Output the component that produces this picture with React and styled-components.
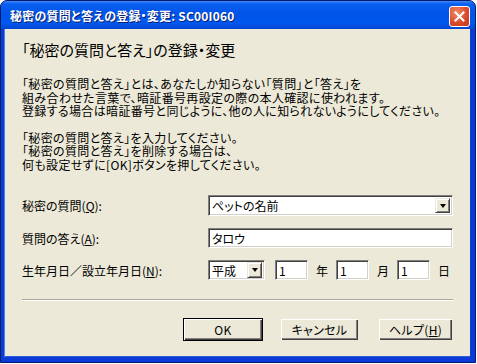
import React from "react";
import styled, { createGlobalStyle } from "styled-components";

const GlobalStyle = createGlobalStyle`
	body {
		margin: 0;
		background: #fff;
		font-family: "Noto Sans CJK JP", "Liberation Sans", sans-serif;
	}
`;

const Window = styled.div`
	width: 476px;
	height: 363px;
	box-sizing: border-box;
	display: flex;
	flex-direction: column;
	background: #0a3bd6;
	border: 1px solid #001a6e;
	border-radius: 7px 7px 0 0;
	overflow: hidden;
`;

const TitleBar = styled.div`
	height: 28px;
	flex-shrink: 0;
	display: flex;
	align-items: center;
	justify-content: space-between;
	padding: 0 5px 0 9px;
	background: linear-gradient(
		#3d8cf7 0%,
		#0a5ff0 10%,
		#0055e8 45%,
		#0058ee 80%,
		#0046cf 100%
	);
`;

const Title = styled.span`
	color: #fff;
	font-size: 12px;
	font-weight: bold;
	letter-spacing: 0.2px;
	text-shadow: 1px 1px 0 #0a1e6e;
	font-feature-settings: "palt";
`;

const CloseButton = styled.div`
	width: 21px;
	height: 21px;
	box-sizing: border-box;
	border: 1px solid #fff;
	border-radius: 3px;
	background: radial-gradient(circle at 35% 30%, #f08a68, #d9482a 60%, #c23a1c);
	display: grid;
	place-items: center;
	margin-top: 2px;
`;

const Frame = styled.div`
	flex: 1;
	display: flex;
	padding: 0 5px 5px 3px;
	min-width: 0;
`;

const Content = styled.div`
	flex: 1;
	min-width: 0;
	background: #ece9d8;
	box-shadow: inset 1px 0 0 #4f80f0, inset 0 -1px 0 #2f5fd8;
	padding: 12px 17px 0 18px;
	color: #000;
	font-size: 12px;
`;

const Heading = styled.h1`
	margin: 0 0 18px 0;
	font-size: 15px;
	font-weight: normal;
	line-height: 18px;
	font-feature-settings: "palt";
`;

const Para = styled.p`
	margin: 0 0 ${(p) => p.$gap || 0}px 0;
	line-height: 13.5px;
	font-size: 12px;
	font-feature-settings: "palt";
	letter-spacing: 0.35px;
`;

const Form = styled.div`
	display: grid;
	grid-template-columns: 186px minmax(0, 1fr);
	row-gap: 12px;
	align-items: center;
	margin-top: 24px;
`;

const Label = styled.label`
	font-size: 12px;
	font-feature-settings: "palt";
	u {
		text-decoration: underline;
	}
`;

const Sunken = styled.div`
	box-sizing: border-box;
	height: ${(p) => p.$h || 20}px;
	width: ${(p) => (p.$w ? `${p.$w}px` : "auto")};
	margin-left: ${(p) => p.$ml || 0}px;
	background: #fff;
	border-top: 1px solid #808080;
	border-left: 1px solid #808080;
	border-right: 1px solid #fff;
	border-bottom: 1px solid #fff;
	box-shadow: inset 1px 1px 0 #404040, inset -1px -1px 0 #d4d0c8;
	display: flex;
	align-items: center;
	padding: 0 2px 0 3px;
	font-size: 12px;
	font-feature-settings: "palt";
	flex-shrink: 0;
`;

const ValueText = styled.span`
	flex: 1;
`;

const DropButton = styled.div`
	width: 15px;
	height: ${(p) => p.$h || 15}px;
	box-sizing: border-box;
	background: #ece9d8;
	border-top: 1px solid #ece9d8;
	border-left: 1px solid #ece9d8;
	border-right: 1px solid #404040;
	border-bottom: 1px solid #404040;
	box-shadow: inset 1px 1px 0 #fff, inset -1px -1px 0 #808080;
	display: grid;
	place-items: center;
`;

const Arrow = styled.span`
	width: 0;
	height: 0;
	border-left: 3.5px solid transparent;
	border-right: 3.5px solid transparent;
	border-top: 4px solid #000;
`;

const DateRow = styled.div`
	display: flex;
	align-items: center;
`;

const Unit = styled.span`
	margin: 0 8px 0 8px;
	font-size: 12px;
`;

const Separator = styled.div`
	margin-top: 19px;
	border-top: 1px solid #aca899;
	border-bottom: 1px solid #fff;
`;

const ButtonRow = styled.div`
	display: flex;
	justify-content: flex-end;
	margin-top: 17px;
`;

const Button = styled.div`
	box-sizing: border-box;
	width: ${(p) => p.$w}px;
	height: 23px;
	margin-left: ${(p) => p.$gap || 0}px;
	background: #ece9d8;
	border: 1px solid ${(p) => (p.$default ? "#000" : "#ece9d8")};
	box-shadow: inset 1px 1px 0 #fff, inset -1px -1px 0 #404040,
		inset -2px -2px 0 #808080;
	display: flex;
	align-items: center;
	justify-content: center;
	white-space: nowrap;
	font-size: 12px;
	font-feature-settings: "palt";
	letter-spacing: 0.3px;
`;

export default function App() {
	return (
		<>
			<GlobalStyle />
			<Window>
				<TitleBar>
					<Title>秘密の質問と答えの登録・変更: SC00I060</Title>
					<CloseButton>
						<svg width="11" height="11" viewBox="0 0 11 11">
							<path
								d="M1.5 1.5 L9.5 9.5 M9.5 1.5 L1.5 9.5"
								stroke="#fff"
								strokeWidth="2"
								strokeLinecap="square"
							/>
						</svg>
					</CloseButton>
				</TitleBar>
				<Frame>
					<Content>
						<Heading>「秘密の質問と答え」の登録・変更</Heading>
						<Para $gap={13}>
							「秘密の質問と答え」とは、あなたしか知らない「質問」と「答え」を
							<br />
							組み合わせた言葉で、暗証番号再設定の際の本人確認に使われます。
							<br />
							登録する場合は暗証番号と同じように、他の人に知られないようにしてください。
						</Para>
						<Para>
							「秘密の質問と答え」を入力してください。
							<br />
							「秘密の質問と答え」を削除する場合は、
							<br />
							何も設定せずに[OK]ボタンを押してください。
						</Para>
						<Form>
							<Label>
								秘密の質問(<u>Q</u>):
							</Label>
							<Sunken $h={21}>
								<ValueText>ペットの名前</ValueText>
								<DropButton>
									<Arrow />
								</DropButton>
							</Sunken>
							<Label>
								質問の答え(<u>A</u>):
							</Label>
							<Sunken>
								<ValueText>タロウ</ValueText>
							</Sunken>
							<Label>
								生年月日／設立年月日(<u>N</u>):
							</Label>
							<DateRow>
								<Sunken $w={57}>
									<ValueText>平成</ValueText>
									<DropButton $h={16}>
										<Arrow />
									</DropButton>
								</Sunken>
								<Sunken $w={33} $ml={10}>
									<ValueText>1</ValueText>
								</Sunken>
								<Unit>年</Unit>
								<Sunken $w={33}>
									<ValueText>1</ValueText>
								</Sunken>
								<Unit>月</Unit>
								<Sunken $w={33}>
									<ValueText>1</ValueText>
								</Sunken>
								<Unit>日</Unit>
							</DateRow>
						</Form>
						<Separator />
						<ButtonRow>
							<Button $w={80} $default>
								OK
							</Button>
							<Button $w={79} $gap={17}>
								キャンセル
							</Button>
							<Button $w={75} $gap={19}>
								ヘルプ(<u>H</u>)
							</Button>
						</ButtonRow>
					</Content>
				</Frame>
			</Window>
		</>
	);
}
